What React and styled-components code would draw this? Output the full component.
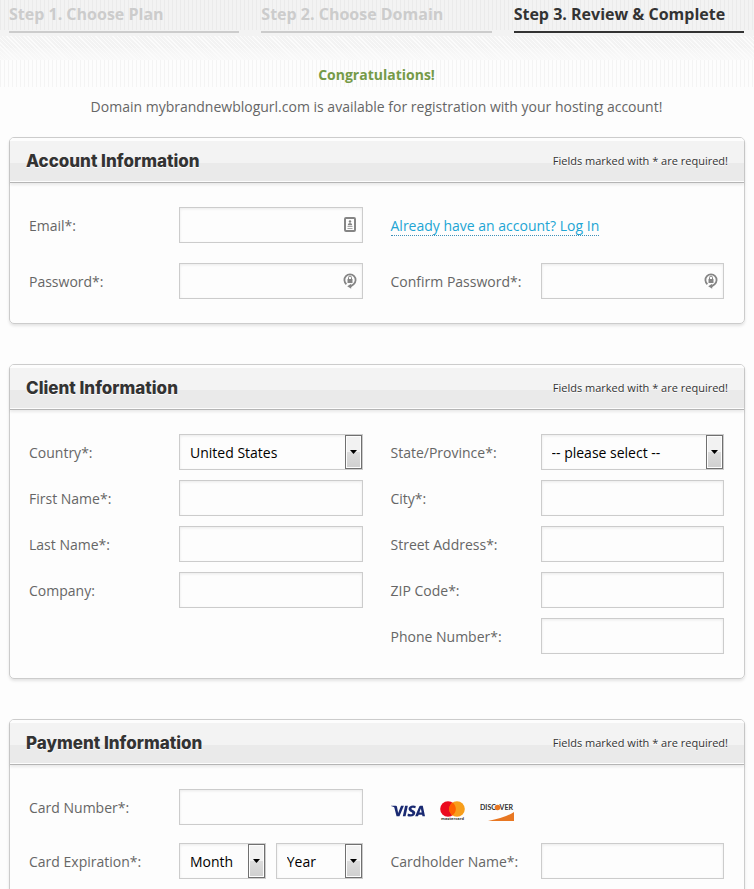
import React, { useState } from "react"
import styled, { createGlobalStyle } from "styled-components"
import { SiVisa } from "react-icons/si"

const GlobalStyle = createGlobalStyle`
  * {
    box-sizing: border-box;
  }

  body {
    margin: 0;
    background: #fdfdfd;
    color: #666666;
    font-family: "Open Sans", sans-serif;
    font-size: 14px;
    line-height: 20px;
  }
`

const Page = styled.main`
  padding: 3px 9px 40px;
  background:
    repeating-linear-gradient(90deg, #ebebeb 0 1px, transparent 1px 4px) 0 0 / 100% 30px no-repeat,
    repeating-linear-gradient(45deg, #fbfbfb 0 1px, transparent 1px 3px) 0 36px / 100% 24px no-repeat,
    linear-gradient(#f3f3f3, #f3f3f3) 0 0 / 100% 48px no-repeat,
    linear-gradient(#f5f5f5, #f9f9f9) 0 48px / 100% 12px no-repeat,
    repeating-linear-gradient(90deg, #f4f4f4 0 1px, transparent 1px 4px) 0 60px / 100% 27px no-repeat,
    #fdfdfd;
`

const Intro = styled.div`
  padding-right: 1px;
`

const Steps = styled.ol`
  display: grid;
  grid-template-columns: repeat(3, 1fr);
  gap: 22px;
  margin: 0;
  padding: 0;
  list-style: none;
`

const Step = styled.li`
  padding-bottom: 6px;
  border-bottom: 2px solid ${props => (props.$active ? "#333333" : "#cccccc")};
  color: ${props => (props.$active ? "#333333" : "#cccccc")};
  font-size: 16px;
  font-weight: 700;
  line-height: 22px;
`

const Notice = styled.div`
  display: flex;
  flex-direction: column;
  gap: 12px;
  padding: 32px 0 20px;
  text-align: center;
`

const Success = styled.strong`
  color: #759a48;
`

const Message = styled.p`
  margin: 0;
`

const Panel = styled.section`
  margin-bottom: 40px;
  border: 1px solid #cccccc;
  border-radius: 5px;
  box-shadow: 0 2px 3px rgba(0, 0, 0, 0.1);
`

const PanelHeader = styled.header`
  display: flex;
  align-items: center;
  justify-content: space-between;
  height: 45px;
  padding: 2px 16px 0;
  border-bottom: 1px solid #b5b5b5;
  border-radius: 4px 4px 0 0;
  background: linear-gradient(#fdfdfd 0 3px, #f3f3f3 3px 25px, #eaeaea 25px 43px, #fdfdfd 43px);
  box-shadow: 0 2px 3px rgba(0, 0, 0, 0.08);
  color: #333333;
  text-shadow: 0 1px 0 #ffffff;
`

const PanelTitle = styled.h2`
  margin: 0;
  font-family: "Inter", sans-serif;
  font-size: 17px;
  font-weight: 800;
`

const Required = styled.span`
  font-size: 11px;
`

const PanelBody = styled.div`
  display: grid;
  grid-template-columns: 1fr 1fr;
  column-gap: 28px;
  padding: 24px 20px 24px 19px;
`

const Column = styled.div`
  display: flex;
  flex-direction: column;
  gap: ${props => props.$gap}px;
`

const Row = styled.div`
  display: grid;
  grid-template-columns: 150px 1fr;
  align-items: center;
  height: 36px;
`

const Label = styled.label`
  padding-top: 2px;
`

const LinkRow = styled.div`
  display: flex;
  align-items: center;
  height: 36px;
  padding-top: 2px;
`

const Control = styled.div`
  position: relative;
  flex: 1;
`

const Input = styled.input`
  display: block;
  width: 100%;
  height: 36px;
  padding: 0 10px;
  border: 1px solid #cccccc;
  border-radius: 0;
  background: #fdfdfd;
  box-shadow: inset 0 1px 3px rgba(0, 0, 0, 0.08);
  color: #000000;
  font: inherit;
`

const Select = styled.select`
  display: block;
  width: 100%;
  height: 36px;
  padding: 2px 20px 0 10px;
  border: 1px solid #cccccc;
  border-radius: 0;
  appearance: none;
  background: #fdfdfd;
  box-shadow: inset 0 1px 3px rgba(0, 0, 0, 0.08);
  color: #000000;
  font: inherit;
`

const Arrow = styled.span`
  position: absolute;
  top: 1px;
  right: 1px;
  bottom: 1px;
  display: flex;
  align-items: center;
  justify-content: center;
  width: 17px;
  border: 1px solid #707070;
  background: linear-gradient(#f2f2f2 0 50%, #dddddd 50%, #cfcfcf);
  box-shadow: inset 0 0 0 1px #fdfdfd;
  pointer-events: none;
`

const FieldIcon = styled.svg`
  position: absolute;
  top: 9px;
  right: 6px;
  width: 14px;
  height: 18px;
  pointer-events: none;
`

const Expiration = styled.div`
  display: flex;
  gap: 10px;
`

const LoginLink = styled.a`
  border-bottom: 1px dotted #3d8fb8;
  color: #22a5d4;
  line-height: 19px;
  text-decoration: none;
`

const Logos = styled.div`
  display: flex;
  align-items: center;
  gap: 15px;
  height: 36px;
  padding-top: 8px;
`

const ContactIcon = () => (
  <FieldIcon viewBox="0 0 14 18" aria-hidden="true">
    <rect x="2" y="2" width="10" height="13" rx="1" fill="#fdfdfd" stroke="#858585" strokeWidth="2" />
    <circle cx="7" cy="5.5" r="1.2" fill="#858585" />
    <path d="M4.8 9.2c0-3 4.4-3 4.4 0z" fill="#858585" />
    <path d="M4.5 10.5h5M4.5 12.5h5" stroke="#a5a5a5" />
  </FieldIcon>
)

const LockIcon = () => (
  <FieldIcon viewBox="0 0 14 18" aria-hidden="true">
    <path d="M3.4 12.2A5.6 5.6 0 1 1 10.6 12.2L7.5 14.4" fill="none" stroke="#858585" strokeWidth="1.8" />
    <path d="M8.2 11.8v5L4.2 14.3z" fill="#858585" />
    <rect x="4.5" y="7" width="5" height="4" fill="#858585" />
    <path d="M5.5 7V5.6a1.5 1.5 0 0 1 3 0V7" fill="none" stroke="#858585" />
  </FieldIcon>
)

const TextField = ({ id, label, type = "text", icon }) => (
  <Row>
    <Label htmlFor={id}>{label}</Label>
    <Control>
      <Input id={id} name={id} type={type} />
      {icon}
    </Control>
  </Row>
)

const Dropdown = ({ options, ...rest }) => {
  const [value, setValue] = useState(options[0])

  return (
    <Control>
      <Select {...rest} value={value} onChange={e => setValue(e.target.value)}>
        {options.map(option => (
          <option key={option}>{option}</option>
        ))}
      </Select>
      <Arrow aria-hidden="true">
        <svg width="7" height="4" viewBox="0 0 7 4">
          <path d="M0 0h7L3.5 4z" fill="#000000" />
        </svg>
      </Arrow>
    </Control>
  )
}

const SelectField = ({ id, label, options }) => (
  <Row>
    <Label htmlFor={id}>{label}</Label>
    <Dropdown id={id} name={id} options={options} />
  </Row>
)

const FormPanel = ({ title, gap, left, right }) => (
  <Panel>
    <PanelHeader>
      <PanelTitle>{title}</PanelTitle>
      <Required>Fields marked with * are required!</Required>
    </PanelHeader>
    <PanelBody>
      <Column $gap={gap}>{left}</Column>
      <Column $gap={gap}>{right}</Column>
    </PanelBody>
  </Panel>
)

const CardLogos = () => (
  <Logos>
    <SiVisa size={34} color="#1a2a72" title="Visa" />
    <svg width="25" height="22" viewBox="0 0 25 22" role="img" aria-label="Mastercard">
      <circle cx="8" cy="9" r="7.8" fill="#eb0a1e" />
      <circle cx="17" cy="9" r="7.8" fill="#f79e1b" />
      <path d="M12.5 2.6a7.8 7.8 0 0 1 0 12.8a7.8 7.8 0 0 1 0-12.8z" fill="#ff5f00" />
      <text x="12.5" y="20" fontSize="4" fontWeight="700" fill="#333333" textAnchor="middle">mastercard</text>
    </svg>
    <svg width="34" height="22" viewBox="0 0 34 22" role="img" aria-label="Discover">
      <text x="0" y="10" fontFamily="Lato" fontSize="7" fontWeight="700" fill="#333333">DISC</text>
      <circle cx="17.5" cy="7.5" r="2.8" fill="#e87722" />
      <text x="33" y="10" fontFamily="Lato" fontSize="7" fontWeight="700" fill="#333333" textAnchor="end">VER</text>
      <path d="M8 21Q25 18 34 12V21z" fill="#e87722" />
    </svg>
  </Logos>
)

const App = () => (
  <>
    <GlobalStyle />
    <Page>
      <Intro>
        <Steps>
          <Step>Step 1. Choose Plan</Step>
          <Step>Step 2. Choose Domain</Step>
          <Step $active aria-current="step">Step 3. Review &amp; Complete</Step>
        </Steps>

        <Notice>
          <Success>Congratulations!</Success>
          <Message>Domain mybrandnewblogurl.com is available for registration with your hosting account!</Message>
        </Notice>
      </Intro>

      <form>
        <FormPanel
          title="Account Information"
          gap={20}
          left={
            <>
              <TextField id="email" label="Email*:" type="email" icon={<ContactIcon />} />
              <TextField id="password" label="Password*:" type="password" icon={<LockIcon />} />
            </>
          }
          right={
            <>
              <LinkRow>
                <LoginLink href="#login">Already have an account? Log In</LoginLink>
              </LinkRow>
              <TextField id="confirm" label="Confirm Password*:" type="password" icon={<LockIcon />} />
            </>
          }
        />

        <FormPanel
          title="Client Information"
          gap={10}
          left={
            <>
              <SelectField id="country" label="Country*:" options={["United States"]} />
              <TextField id="firstName" label="First Name*:" />
              <TextField id="lastName" label="Last Name*:" />
              <TextField id="company" label="Company:" />
            </>
          }
          right={
            <>
              <SelectField id="state" label="State/Province*:" options={["-- please select --"]} />
              <TextField id="city" label="City*:" />
              <TextField id="street" label="Street Address*:" />
              <TextField id="zip" label="ZIP Code*:" />
              <TextField id="phone" label="Phone Number*:" type="tel" />
            </>
          }
        />

        <FormPanel
          title="Payment Information"
          gap={18}
          left={
            <>
              <TextField id="cardNumber" label="Card Number*:" />
              <Row>
                <Label htmlFor="month">Card Expiration*:</Label>
                <Expiration>
                  <Dropdown id="month" name="month" options={["Month"]} />
                  <Dropdown id="year" name="year" aria-label="Expiration year" options={["Year"]} />
                </Expiration>
              </Row>
            </>
          }
          right={
            <>
              <CardLogos />
              <TextField id="cardholder" label="Cardholder Name*:" />
            </>
          }
        />
      </form>
    </Page>
  </>
)

export default App
